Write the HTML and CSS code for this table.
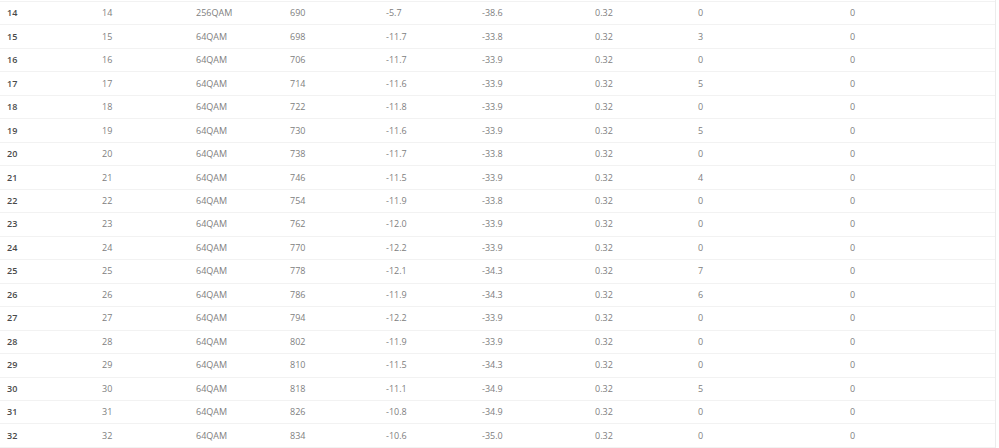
FILE: index.html
```html
<!DOCTYPE html>
<html>
<head>
<meta charset="utf-8">
<link rel="stylesheet" href="styles.css">
</head>
<body>
<div class="card">
<table class="tbl">
<colgroup>
<col class="c1"><col class="c2"><col class="c3"><col class="c4"><col class="c5"><col class="c6"><col class="c7"><col class="c8"><col>
</colgroup>
<tbody>
<tr><th>14</th><td>14</td><td>256QAM</td><td>690</td><td>-5.7</td><td>-38.6</td><td>0.32</td><td>0</td><td>0</td></tr>
<tr><th>15</th><td>15</td><td>64QAM</td><td>698</td><td>-11.7</td><td>-33.8</td><td>0.32</td><td>3</td><td>0</td></tr>
<tr><th>16</th><td>16</td><td>64QAM</td><td>706</td><td>-11.7</td><td>-33.9</td><td>0.32</td><td>0</td><td>0</td></tr>
<tr><th>17</th><td>17</td><td>64QAM</td><td>714</td><td>-11.6</td><td>-33.9</td><td>0.32</td><td>5</td><td>0</td></tr>
<tr><th>18</th><td>18</td><td>64QAM</td><td>722</td><td>-11.8</td><td>-33.9</td><td>0.32</td><td>0</td><td>0</td></tr>
<tr><th>19</th><td>19</td><td>64QAM</td><td>730</td><td>-11.6</td><td>-33.9</td><td>0.32</td><td>5</td><td>0</td></tr>
<tr><th>20</th><td>20</td><td>64QAM</td><td>738</td><td>-11.7</td><td>-33.8</td><td>0.32</td><td>0</td><td>0</td></tr>
<tr><th>21</th><td>21</td><td>64QAM</td><td>746</td><td>-11.5</td><td>-33.9</td><td>0.32</td><td>4</td><td>0</td></tr>
<tr><th>22</th><td>22</td><td>64QAM</td><td>754</td><td>-11.9</td><td>-33.8</td><td>0.32</td><td>0</td><td>0</td></tr>
<tr><th>23</th><td>23</td><td>64QAM</td><td>762</td><td>-12.0</td><td>-33.9</td><td>0.32</td><td>0</td><td>0</td></tr>
<tr><th>24</th><td>24</td><td>64QAM</td><td>770</td><td>-12.2</td><td>-33.9</td><td>0.32</td><td>0</td><td>0</td></tr>
<tr><th>25</th><td>25</td><td>64QAM</td><td>778</td><td>-12.1</td><td>-34.3</td><td>0.32</td><td>7</td><td>0</td></tr>
<tr><th>26</th><td>26</td><td>64QAM</td><td>786</td><td>-11.9</td><td>-34.3</td><td>0.32</td><td>6</td><td>0</td></tr>
<tr><th>27</th><td>27</td><td>64QAM</td><td>794</td><td>-12.2</td><td>-33.9</td><td>0.32</td><td>0</td><td>0</td></tr>
<tr><th>28</th><td>28</td><td>64QAM</td><td>802</td><td>-11.9</td><td>-33.9</td><td>0.32</td><td>0</td><td>0</td></tr>
<tr><th>29</th><td>29</td><td>64QAM</td><td>810</td><td>-11.5</td><td>-34.3</td><td>0.32</td><td>0</td><td>0</td></tr>
<tr><th>30</th><td>30</td><td>64QAM</td><td>818</td><td>-11.1</td><td>-34.9</td><td>0.32</td><td>5</td><td>0</td></tr>
<tr><th>31</th><td>31</td><td>64QAM</td><td>826</td><td>-10.8</td><td>-34.9</td><td>0.32</td><td>0</td><td>0</td></tr>
<tr><th>32</th><td>32</td><td>64QAM</td><td>834</td><td>-10.6</td><td>-35.0</td><td>0.32</td><td>0</td><td>0</td></tr>
</tbody>
</table>
</div>
</body>
</html>
```

FILE: styles.css
```css
html, body {
  margin: 0;
  padding: 0;
  background: #ffffff;
}
body {
  font-family: "Open Sans", "Noto Sans", sans-serif;
  font-size: 9px;
  color: #777;
}
.card {
  width: 995px;
  padding-top: 1px;
  border-right: 1px solid #ececec;
}
.tbl {
  width: 100%;
  border-collapse: collapse;
  table-layout: fixed;
}
.c1 { width: 95px; }
.c2 { width: 94px; }
.c3 { width: 94px; }
.c4 { width: 96px; }
.c5 { width: 96px; }
.c6 { width: 113px; }
.c7 { width: 103px; }
.c8 { width: 152px; }
.tbl tr {
  height: 23.47px;
  border-top: 1px solid #f2f2f2;
}
.tbl tr:last-child {
  border-bottom: 1px solid #f2f2f2;
}
.tbl th, .tbl td {
  padding: 0 0 0 7px;
  text-align: left;
  vertical-align: middle;
  white-space: nowrap;
  line-height: 12px;
}
.tbl th {
  font-weight: 600;
  color: #4a4a4a;
}
.tbl td {
  font-weight: 400;
  color: #808080;
}
```
